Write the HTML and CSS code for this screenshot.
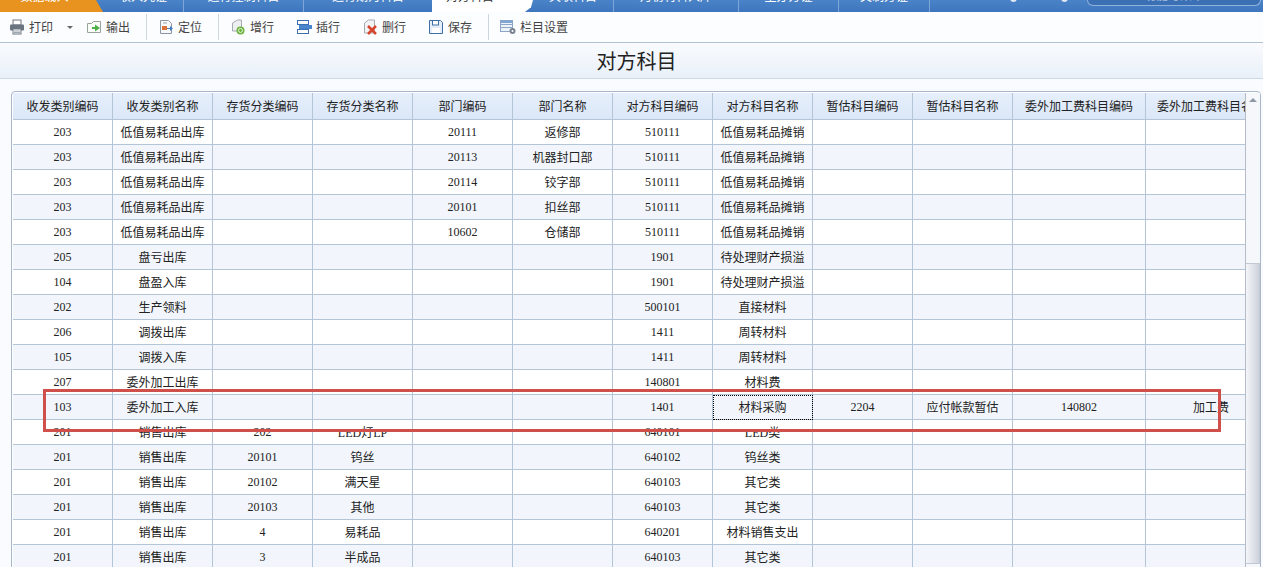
FILE: index.html
```html
<!DOCTYPE html>

<html>
    <head>
        <meta charset="utf-8">
        <title>对方科目</title>

        <link rel="stylesheet" href="styles.css">
    </head>

    <body>
        <div class="page">
            <div class="tabs">
                <div class="tab tab-first"><span>数据载入</span></div>
                <div class="tab tab-a"><span>收入凭证</span></div>
                <div class="tab tab-b"><span>进行控制科目</span></div>
                <div class="tab tab-c"><span>进行期为科目</span></div>
                <div class="tab tab-active"><span>对方科目</span><i>×</i></div>
                <div class="tab tab-a"><span>关联科目</span></div>
                <div class="tab tab-f"><span>月初材料入库</span></div>
                <div class="tab tab-d"><span>主办方证</span></div>
                <div class="tab tab-e"><span>文制方证</span></div>
                <div class="tab-tools">
                    <b class="dot"></b>
                    <b class="dot"></b>
                    <div class="search"><span>功能与菜单</span></div>
                </div>
            </div>

            <div class="toolbar">
                <div class="group">
                    <div class="tool">
                        <svg width="16" height="16" viewBox="0 0 16 16"><rect x="4" y="1" width="8" height="5" fill="#fff" stroke="#6d7681"/><rect x="1" y="5.500" width="14" height="6" rx="1" fill="#6a7480"/><rect x="4" y="10" width="8" height="5" fill="#fff" stroke="#6d7681"/><path d="M5 12h6M5 13.500h6" stroke="#9aa4ae"/></svg>
                        <span>打印</span>
                    </div>
                    <div class="caret"></div>
                    <div class="tool">
                        <svg width="16" height="16" viewBox="0 0 16 16"><path d="M1.500 4.500h4l2-2h7v11h-13z" fill="#fbfcf8" stroke="#9aa39b"/><path d="M6 8h3V5.500l5 3.500-5 3.500V10H6z" fill="#4fb04a"/></svg>
                        <span>输出</span>
                    </div>
                </div>
                <div class="sep"></div>
                <div class="group">
                    <div class="tool">
                        <svg width="16" height="16" viewBox="0 0 16 16"><path d="M2.500 1.500h8l3 3v10h-11z" fill="#f7f8fa" stroke="#8d97a3"/><rect x="4" y="7" width="5" height="4" fill="#d9733a"/><path d="M9 9h3V7l3 2.500-3 2.500v-2H9z" fill="#3f7fc4"/><path d="M5 4h4" stroke="#9aa4ae"/></svg>
                        <span>定位</span>
                    </div>
                </div>
                <div class="sep"></div>
                <div class="group">
                    <div class="tool">
                        <svg width="16" height="16" viewBox="0 0 16 16"><path d="M2.500 4l5-3h4v11h-9z" fill="#eceef0" stroke="#a5abb1"/><circle cx="10.500" cy="11.500" r="4" fill="#6cb33f"/><circle cx="10.500" cy="11.500" r="2" fill="none" stroke="#e8f5dc"/></svg>
                        <span>增行</span>
                    </div>
                    <div class="tool">
                        <svg width="16" height="16" viewBox="0 0 16 16"><rect x="1.500" y="1.500" width="11" height="4" fill="#fff" stroke="#3b6fb0"/><rect x="3" y="6" width="13" height="4" fill="#4a86cc"/><rect x="1.500" y="10.500" width="11" height="4" fill="#fff" stroke="#3b6fb0"/></svg>
                        <span>插行</span>
                    </div>
                    <div class="tool">
                        <svg width="16" height="16" viewBox="0 0 16 16"><path d="M2.500 4l4-3h6v13h-10z" fill="#f2f3f4" stroke="#a5abb1"/><path d="M6 7l8 8M14 7l-8 8" stroke="#d8452e" stroke-width="2.500"/></svg>
                        <span>删行</span>
                    </div>
                    <div class="tool">
                        <svg width="16" height="16" viewBox="0 0 16 16"><path d="M1.500 1.500h11l2 2v11h-13z" fill="#e4edf8" stroke="#3f6ea8"/><rect x="4.500" y="1.500" width="6" height="4.500" fill="#fff" stroke="#3f6ea8"/><rect x="4" y="9" width="8" height="5" fill="#fff"/></svg>
                        <span>保存</span>
                    </div>
                </div>
                <div class="sep"></div>
                <div class="group">
                    <div class="tool">
                        <svg width="16" height="16" viewBox="0 0 16 16"><rect x="0.500" y="1.500" width="12" height="11" fill="#eef3fa" stroke="#8ba6c6"/><path d="M1 5.500h11M1 8.500h11" stroke="#8ba6c6"/><rect x="1" y="2" width="11" height="2" fill="#7fa6d6"/><circle cx="12.500" cy="12" r="3" fill="#7b8490"/><circle cx="12.500" cy="12" r="1" fill="#fff"/></svg>
                        <span>栏目设置</span>
                    </div>
                </div>
            </div>

            <div class="title">对方科目</div>

            <div class="panel">
                <div class="grid-area">
                    <table class="grid">
                        <colgroup>
                            <col class="c"><col class="c"><col class="c"><col class="c"><col class="c"><col class="c"><col class="c"><col class="c"><col class="c"><col class="c"><col class="c-wide"><col class="c">
                        </colgroup>
                        <thead>
                            <tr><th>收发类别编码</th><th>收发类别名称</th><th>存货分类编码</th><th>存货分类名称</th><th>部门编码</th><th>部门名称</th><th>对方科目编码</th><th>对方科目名称</th><th>暂估科目编码</th><th>暂估科目名称</th><th>委外加工费科目编码</th><th class="clip">委外加工费科目名称</th></tr>
                        </thead>
                        <tbody>
                            <tr><td>203</td><td>低值易耗品出库</td><td></td><td></td><td>20111</td><td>返修部</td><td>510111</td><td>低值易耗品摊销</td><td></td><td></td><td></td><td></td></tr>
                            <tr><td>203</td><td>低值易耗品出库</td><td></td><td></td><td>20113</td><td>机器封口部</td><td>510111</td><td>低值易耗品摊销</td><td></td><td></td><td></td><td></td></tr>
                            <tr><td>203</td><td>低值易耗品出库</td><td></td><td></td><td>20114</td><td>铰字部</td><td>510111</td><td>低值易耗品摊销</td><td></td><td></td><td></td><td></td></tr>
                            <tr><td>203</td><td>低值易耗品出库</td><td></td><td></td><td>20101</td><td>扣丝部</td><td>510111</td><td>低值易耗品摊销</td><td></td><td></td><td></td><td></td></tr>
                            <tr><td>203</td><td>低值易耗品出库</td><td></td><td></td><td>10602</td><td>仓储部</td><td>510111</td><td>低值易耗品摊销</td><td></td><td></td><td></td><td></td></tr>
                            <tr><td>205</td><td>盘亏出库</td><td></td><td></td><td></td><td></td><td>1901</td><td>待处理财产损溢</td><td></td><td></td><td></td><td></td></tr>
                            <tr><td>104</td><td>盘盈入库</td><td></td><td></td><td></td><td></td><td>1901</td><td>待处理财产损溢</td><td></td><td></td><td></td><td></td></tr>
                            <tr><td>202</td><td>生产领料</td><td></td><td></td><td></td><td></td><td>500101</td><td>直接材料</td><td></td><td></td><td></td><td></td></tr>
                            <tr><td>206</td><td>调拨出库</td><td></td><td></td><td></td><td></td><td>1411</td><td>周转材料</td><td></td><td></td><td></td><td></td></tr>
                            <tr><td>105</td><td>调拨入库</td><td></td><td></td><td></td><td></td><td>1411</td><td>周转材料</td><td></td><td></td><td></td><td></td></tr>
                            <tr><td>207</td><td>委外加工出库</td><td></td><td></td><td></td><td></td><td>140801</td><td>材料费</td><td></td><td></td><td></td><td></td></tr>
                            <tr><td>103</td><td>委外加工入库</td><td></td><td></td><td></td><td></td><td>1401</td><td class="current">材料采购</td><td>2204</td><td>应付帐款暂估</td><td>140802</td><td class="to-right">加工费</td></tr>
                            <tr><td>201</td><td>销售出库</td><td>202</td><td>LED灯LP</td><td></td><td></td><td>640101</td><td>LED类</td><td></td><td></td><td></td><td></td></tr>
                            <tr><td>201</td><td>销售出库</td><td>20101</td><td>钨丝</td><td></td><td></td><td>640102</td><td>钨丝类</td><td></td><td></td><td></td><td></td></tr>
                            <tr><td>201</td><td>销售出库</td><td>20102</td><td>满天星</td><td></td><td></td><td>640103</td><td>其它类</td><td></td><td></td><td></td><td></td></tr>
                            <tr><td>201</td><td>销售出库</td><td>20103</td><td>其他</td><td></td><td></td><td>640103</td><td>其它类</td><td></td><td></td><td></td><td></td></tr>
                            <tr><td>201</td><td>销售出库</td><td>4</td><td>易耗品</td><td></td><td></td><td>640201</td><td>材料销售支出</td><td></td><td></td><td></td><td></td></tr>
                            <tr><td>201</td><td>销售出库</td><td>3</td><td>半成品</td><td></td><td></td><td>640103</td><td>其它类</td><td></td><td></td><td></td><td></td></tr>
                        </tbody>
                    </table>
                </div>
                <div class="scrollbar">
                    <div class="arrow"></div>
                    <div class="thumb"></div>
                </div>
            </div>

            <div class="red-box"></div>
        </div>
    </body>
</html>
```

FILE: styles.css
```css
html, body {
    margin: 0;
    padding: 0;
}

.page {
    position: relative;
    width: 1263px;
    height: 567px;
    overflow: hidden;
    background: #f9fbfe;
    font-family: "Liberation Serif", "Noto Sans CJK SC", sans-serif;
    font-size: 12px;
    color: #222;
}

/* top tabs, only their lower edge is on screen */
.tabs {
    display: flex;
    height: 12px;
    overflow: hidden;
    background: linear-gradient(#4b83c8, #3d76bd);
}

.tab {
    display: flex;
    align-items: flex-end;
    justify-content: center;
    box-sizing: border-box;
    flex: none;
    border-right: 1px solid #7fa6d6;
    color: #fff;
}
.tab span {
    line-height: 12px;
    margin-bottom: 9px;
}

.tab-first {
    width: 103px;
    padding-right: 14px;
    border: 0;
    background: #e8931f;
    clip-path: polygon(0 0, 96px 0, 103px 12px, 0 12px);
}
.tab-a { width: 81px; }
.tab-b { width: 120px; }
.tab-c { width: 128px; border: 0; }
.tab-d { width: 100px; }
.tab-e { width: 91px; }
.tab-f { width: 125px; }

.tab-active {
    width: 101px;
    padding-right: 4px;
    color: #333;
    background: #fff;
    border: 0;
    clip-path: polygon(0 0, 100% 0, 98% 60%, 92% 100%, 0 100%);
}
.tab-active i {
    margin: 0 0 9px 14px;
    line-height: 12px;
    font-style: normal;
    color: #999;
}

.tab-tools {
    display: flex;
    flex: 1;
    height: 12px;
}
.dot {
    width: 7px;
    height: 8px;
    margin-top: -6px;
    border-radius: 50%;
    background: #dfe8f4;
}
.dot:nth-child(1) { margin-left: 80px; }
.dot:nth-child(2) { margin-left: 44px; }

.search {
    width: 172px;
    height: 5px;
    margin-left: 19px;
    border: 1px solid #8fb2dd;
    border-top: 0;
    border-radius: 0 0 8px 8px;
    background: #3b70b4;
    overflow: hidden;
    display: flex;
    align-items: flex-end;
    justify-content: center;
    color: #a9c0de;
}
.search span {
    line-height: 12px;
    margin-bottom: 3px;
}

/* toolbar */
.toolbar {
    display: flex;
    align-items: center;
    box-sizing: border-box;
    height: 31px;
    padding-left: 9px;
    border-bottom: 1px solid #b3c0d0;
    background: #fcfdff;
    color: #444;
}
.group {
    display: flex;
    align-items: center;
    gap: 22px;
}
.tool {
    display: flex;
    align-items: center;
    gap: 4px;
}
.tool svg {
    flex: none;
}
.caret {
    width: 0;
    height: 0;
    margin: 0 -9px 0 -8px;
    border: 3px solid transparent;
    border-top: 3px solid #666;
    border-bottom: 0;
}
.sep {
    width: 1px;
    height: 26px;
    margin: 0 11px 0 16px;
    background: #cdd5df;
}

.title {
    box-sizing: border-box;
    height: 36px;
    line-height: 38px;
    padding-left: 10px;
    text-align: center;
    font-size: 20px;
    border-bottom: 1px solid #cfd9e6;
    background: linear-gradient(#f9fbfe, #e9f0f9);
}

/* grid */
.panel {
    display: flex;
    box-sizing: border-box;
    width: 1250px;
    height: 490px;
    margin: 12px 0 0 11px;
    padding: 1px 0 0 1px;
    border: 1px solid #a9b8c9;
    border-radius: 4px;
    background: #fff;
}
.grid-area {
    width: 1232px;
    overflow: hidden;
    flex: none;
}
.grid {
    table-layout: fixed;
    border-collapse: separate;
    border-spacing: 0;
    width: 1233px;
}
.c { width: 100px; }
.c-wide { width: 133px; }

.grid th, .grid td {
    box-sizing: border-box;
    padding: 0;
    text-align: center;
    white-space: nowrap;
    overflow: hidden;
    font-weight: normal;
    border-right: 1px solid #b4c5d8;
    border-bottom: 1px solid #b4c5d8;
}
.grid th {
    height: 27px;
    background: linear-gradient(#e6effb, #dbe7f8);
}
.grid td {
    height: 25px;
}
.grid tbody tr:nth-child(even) td {
    background: #f2f6fc;
}
.grid th.clip {
    text-align: left;
    padding-left: 11px;
}
.grid td.to-right {
    text-align: right;
    padding-right: 16px;
}
.grid td.current {
    outline: 1px dotted #000;
    outline-offset: -1px;
}

.scrollbar {
    flex: 1;
    border-left: 1px solid #b4bcc8;
    background: #f5f7fb;
}
.arrow {
    width: 0;
    height: 0;
    margin: 5px auto 0;
    border: 4px solid transparent;
    border-bottom: 4px solid #8e99a6;
    border-top: 0;
}
.thumb {
    box-sizing: border-box;
    height: 301px;
    margin-top: 161px;
    border: 1px solid #c2c9d3;
    border-left: 0;
    background: linear-gradient(to right, #f5f6f9, #cdd2dc);
}

/* the mark drawn over the screenshot */
.red-box {
    position: absolute;
    left: 43px;
    top: 389px;
    box-sizing: border-box;
    width: 1178px;
    height: 43px;
    border: 3px solid #cf4f4b;
}
```
